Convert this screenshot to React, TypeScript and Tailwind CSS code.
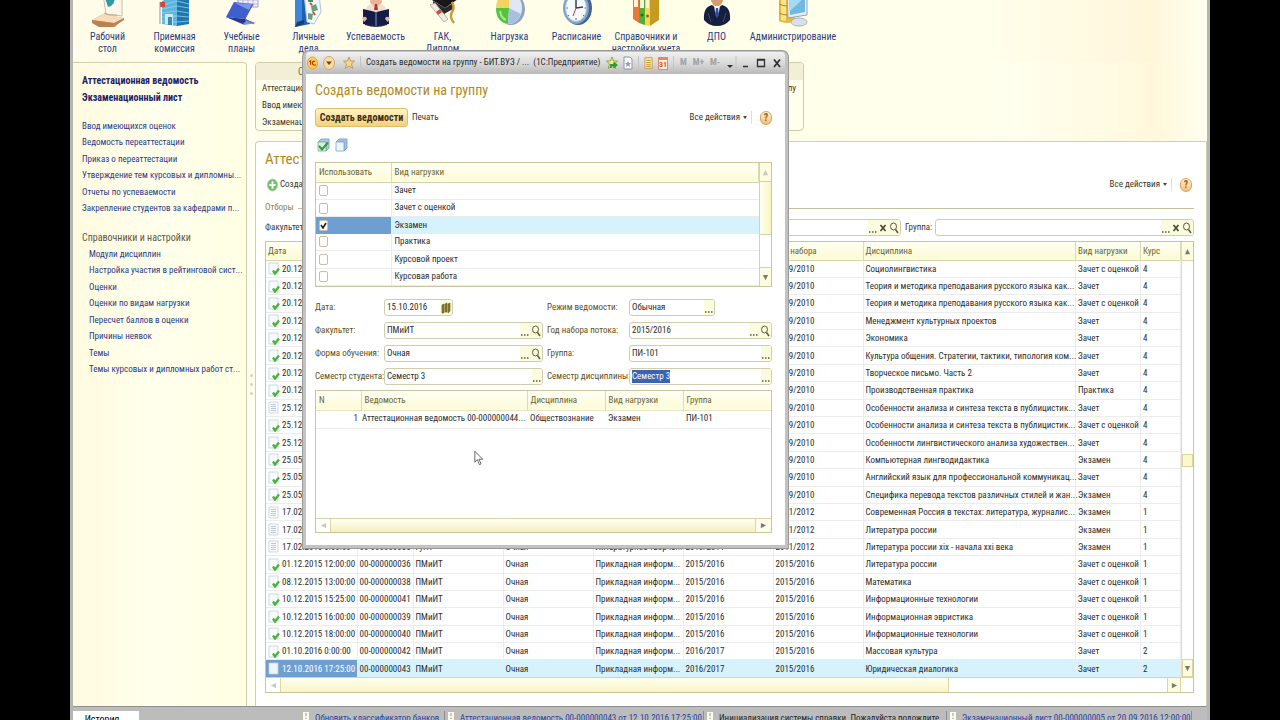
import { useEffect, useRef, type ReactNode } from "react";

const deskIcon = (
  <g>
    <path d="M2 20 13 14l21 4-9 9L8 26z" fill="#d9a878" />
    <path d="M2 20 13 14l21 4-10 5z" fill="#f6dcbc" />
    <path d="M2 20v3l7 4h14l11-7v-2l-10 5z" fill="#b98250" />
    <path d="M13-6h19v22l-16-2z" fill="#fff8ea" stroke="#c9bfa5" />
    <path d="M15-2h9a8 7 0 0 1-6 9z" fill="#2f9aa8" />
    <path d="M14 13q5 3 13 2" fill="none" stroke="#b8a78a" />
  </g>
);
const buildingIcon = (
  <g>
    <path d="M5 1 20-6v32L5 24z" fill="#5fb6dc" />
    <path d="M20-6 32 0v24l-12 2z" fill="#1f78ad" />
    <path d="M5 5l15-4 12 3M5 9l15-3 12 2M5 13l15-2 12 2M5 17l15-1 12 1M5 21l15 1 12-1" stroke="#8fd0ec" strokeWidth=".8" fill="none" />
    <path d="M8 14h8v11l-8-1z" fill="#c9edf8" />
    <path d="M11 17h4v8h-4z" fill="#3d88b1" />
    <path d="M3 2h5v5H3z" fill="#d9432f" />
    <path d="M3 2v22" stroke="#8f9aa0" />
  </g>
);
const plansIcon = (
  <g>
    <path d="M14-5h20v12H14z" fill="#f0f1f8" stroke="#9fa5c0" />
    <path d="M14 0h20M14 4h20M19-5V7M24-5V7M29-5V7" stroke="#a9afc9" strokeWidth=".8" />
    <path d="M2 17 10 2l19 2-8 15z" fill="#3f5fd0" />
    <path d="M11 3l17 1-3 6z" fill="#7e97ea" />
    <path d="M2 17l19 2 11 4-12 2z" fill="#7c8fd6" />
    <path d="M2 17l19 2 1 2-3 3z" fill="#24388f" />
    <path d="M29 4 21 19l9 5" fill="none" stroke="#55639f" />
  </g>
);
const filesIcon = (
  <g>
    <path d="M4-6h15v30L4 27z" fill="#1f5fb8" />
    <path d="M4-6h7v30l-7 3z" fill="#3f86d8" />
    <path d="M6 22l7-2v4l-9 3z" fill="#173f7c" />
    <path d="M13-6h15l2 18-7 12-7-2z" fill="#f4f6fa" stroke="#b6c0d0" />
    <path d="M17-4h5v6h-5z" fill="#4f8a57" />
    <path d="M20 6l5-2 2 6-6 2zM17 13l5 1-1 6-4-1z" fill="#6aa07d" />
    <path d="M19 3l2 2M22 12l2 3" stroke="#bb5342" strokeWidth="2" />
  </g>
);
const readerIcon = (
  <g>
    <path d="M13-6h10l1 8-3 7h-6l-3-7z" fill="#e8b596" />
    <path d="M8 11q0-6 6-7l4 4 4-4q6 1 6 7z" fill="#f2ddd0" />
    <path d="M17 4h2l1 6h-4z" fill="#a33a34" />
    <path d="M7 21h22v4q-11 4-22 0z" fill="#2b3148" />
    <path d="M5 9l13 3 13-3v15l-13 2-13-2z" fill="#141d48" />
    <path d="M18 12v14" stroke="#8f97ba" />
    <path d="M4 18q4-3 5 1l-3 3zM32 18q-4-3-5 1l3 3z" fill="#e8b596" />
  </g>
);
const diplomaIcon = (
  <g>
    <path d="M2-3 18-9 33-1 20 8z" fill="#171717" />
    <path d="M8 1l12 7 8-5v6l-9 5-11-6z" fill="#2c2a29" />
    <path d="M5 5l14 17 4-3L10 3z" fill="#f2ede1" stroke="#a89f8f" strokeWidth=".8" />
    <path d="M11 12l4-3 2 3-4 3z" fill="#c95140" />
    <path d="M27 2q3 6 0 10-3 5 2 11" stroke="#c59b3e" strokeWidth="2.5" fill="none" />
  </g>
);
const pieIcon = (
  <g>
    <ellipse cx="19" cy="9" rx="14" ry="16" fill="#8fa4bd" />
    <ellipse cx="17" cy="8" rx="13" ry="16" fill="#dfe9f5" />
    <path d="M17 8V-8Q5-7 4 8z" fill="#f3d260" />
    <path d="M17 8H4q0 14 12 16z" fill="#56c23f" />
    <path d="M17 8l-1 16q9 0 13-10z" fill="#a9bfe0" />
    <path d="M8 11q1 7 6 9" stroke="#a7ec8d" strokeWidth="2" fill="none" />
  </g>
);
const clockIcon = (
  <g>
    <ellipse cx="19" cy="8" rx="14" ry="17" fill="#44648f" />
    <ellipse cx="17" cy="8" rx="13" ry="16" fill="#7fa2cd" />
    <ellipse cx="17" cy="8" rx="10.500" ry="13.500" fill="#f7fafd" stroke="#b4c4d8" />
    <path d="M17 8V0M17 8l7-1" stroke="#35425a" strokeWidth="1.500" />
    <path d="M17 8l-3 8" stroke="#c83a30" />
    <path d="M17 18v2M9 8H7.500M27 8h-1.500M10 15l-1 1M24 15l1 1" stroke="#5a6a80" />
  </g>
);
const bindersIcon = (
  <g>
    <path d="M5-6h6v29l-6-4z" fill="#e77938" />
    <path d="M11-6h6v31l-6-2z" fill="#55ab3c" />
    <path d="M17-6h5v32l-5-1z" fill="#f6d850" />
    <path d="M22-6l9-1v27l-9 6z" fill="#c99a22" />
    <path d="M18-1h3v9h-3zM12 0h4v8h-4zM6 0h4v7H6z" fill="#fff4d4" />
    <circle cx="19.500" cy="16" r="1.500" fill="#8b6812" />
    <circle cx="14" cy="15" r="1.500" fill="#1f6c1a" />
  </g>
);
const personIcon = (
  <g>
    <path d="M13-6h10l1 7-3 5h-6l-3-5z" fill="#d79a72" />
    <path d="M5 20q-1-13 8-15l5 4 5-4q9 2 8 15-5 6-13 6T5 20z" fill="#16203e" />
    <path d="M15 5l3 3 3-3-1 7-2 3-2-3z" fill="#f3f4f8" />
    <path d="M17 8h2l1 7-2 3-2-3z" fill="#2c4fa6" />
    <path d="M9 13l3 9M27 13l-3 9" stroke="#3c486f" />
  </g>
);
const adminIcon = (
  <g>
    <path d="M4-6h16v27q-8 4-16 0z" fill="#e5b93c" />
    <path d="M6-6h5v27l-5-1z" fill="#fbe38a" />
    <path d="M4 4q8 4 16 0M4 13q8 4 16 0" stroke="#b28b24" fill="none" />
    <path d="M12-4l20-2v21l-19 3z" fill="#e6eef5" stroke="#8ea4b6" />
    <path d="M14-1l16-2v15l-15 3z" fill="#6fb9e2" />
    <path d="M14-1l16-2-15 14z" fill="#a8daf3" />
    <ellipse cx="24" cy="22" rx="8" ry="4" fill="#d9e1e8" stroke="#aab5be" />
  </g>
);

const sections: { icon: ReactNode; lines: string[]; w: string }[] = [
  { icon: deskIcon, lines: ["Рабочий", "стол"], w: "w-[67px]" },
  { icon: buildingIcon, lines: ["Приемная", "комиссия"], w: "w-[67px]" },
  { icon: plansIcon, lines: ["Учебные", "планы"], w: "w-[67px]" },
  { icon: filesIcon, lines: ["Личные", "дела"], w: "w-[67px]" },
  { icon: readerIcon, lines: ["Успеваемость"], w: "w-[67px]" },
  { icon: diplomaIcon, lines: ["ГАК,", "Диплом"], w: "w-[67px]" },
  { icon: pieIcon, lines: ["Нагрузка"], w: "w-[67px]" },
  { icon: clockIcon, lines: ["Расписание"], w: "w-[67px]" },
  { icon: bindersIcon, lines: ["Справочники и", "настройки учета"], w: "w-[72px]" },
  { icon: personIcon, lines: ["ДПО"], w: "w-[69px]" },
  { icon: adminIcon, lines: ["Администрирование"], w: "w-[84px]" },
];

const commands = [
  "Ввод имеющихся оценок",
  "Ведомость переаттестации",
  "Приказ о переаттестации",
  "Утверждение тем курсовых и дипломны...",
  "Отчеты по успеваемости",
  "Закрепление студентов за кафедрами п...",
];
const references = [
  "Модули дисциплин",
  "Настройка участия в рейтинговой сист...",
  "Оценки",
  "Оценки по видам нагрузки",
  "Пересчет баллов в оценки",
  "Причины неявок",
  "Темы",
  "Темы курсовых и дипломных работ ст...",
];

type Row = { ok: boolean; c: string[] };
const r = (ok: boolean, ...c: string[]): Row => ({ ok, c });
const info = "Прикладная информ...";
const rows: Row[] = [
  r(true, "20.12.2013", "", "", "", "", "", "2009/2010", "Социолингвистика", "Зачет с оценкой", "4"),
  r(true, "20.12.2013", "", "", "", "", "", "2009/2010", "Теория и методика преподавания русского языка как...", "Зачет", "4"),
  r(true, "20.12.2013", "", "", "", "", "", "2009/2010", "Теория и методика преподавания русского языка как...", "Зачет с оценкой", "4"),
  r(true, "20.12.2013", "", "", "", "", "", "2009/2010", "Менеджмент культурных проектов", "Зачет", "4"),
  r(true, "20.12.2013", "", "", "", "", "", "2009/2010", "Экономика", "Зачет", "4"),
  r(true, "20.12.2013", "", "", "", "", "", "2009/2010", "Культура общения. Стратегии, тактики, типология ком...", "Зачет", "4"),
  r(true, "20.12.2013", "", "", "", "", "", "2009/2010", "Творческое письмо. Часть 2", "Зачет", "4"),
  r(true, "20.12.2013", "", "", "", "", "", "2009/2010", "Производственная практика", "Практика", "4"),
  r(false, "25.12.2013", "", "", "", "", "", "2009/2010", "Особенности анализа и синтеза текста в публицистик...", "Зачет", "4"),
  r(true, "25.12.2013", "", "", "", "", "", "2009/2010", "Особенности анализа и синтеза текста в публицистик...", "Зачет с оценкой", "4"),
  r(true, "25.12.2013", "", "", "", "", "", "2009/2010", "Особенности лингвистического анализа художествен...", "Зачет", "4"),
  r(true, "25.05.2014", "", "", "", "", "", "2009/2010", "Компьютерная лингводидактика", "Экзамен", "4"),
  r(true, "25.05.2014", "", "", "", "", "", "2009/2010", "Английский язык для профессиональной коммуникац...", "Зачет", "4"),
  r(true, "25.05.2014", "", "", "", "", "", "2009/2010", "Специфика перевода текстов различных стилей и жан...", "Экзамен", "4"),
  r(false, "17.02.2015", "", "", "", "", "", "2011/2012", "Современная Россия в текстах: литература, журналис...", "Экзамен", "1"),
  r(false, "17.02.2015", "", "", "", "", "", "2011/2012", "Литература россии", "Экзамен", "1"),
  r(false, "17.02.2015 0:00:00", "00-000000035", "ГуПТ", "Очная", "Литературное творче...", "2010/2011", "2011/2012", "Литература россии xix - начала xxi века", "Экзамен", "1"),
  r(true, "01.12.2015 12:00:00", "00-000000036", "ПМиИТ", "Очная", info, "2015/2016", "2015/2016", "Литература россии", "Зачет с оценкой", "1"),
  r(true, "08.12.2015 13:00:00", "00-000000038", "ПМиИТ", "Очная", info, "2015/2016", "2015/2016", "Математика", "Зачет с оценкой", "1"),
  r(true, "10.12.2015 15:25:00", "00-000000041", "ПМиИТ", "Очная", info, "2015/2016", "2015/2016", "Информационные технологии", "Зачет с оценкой", "1"),
  r(true, "10.12.2015 16:00:00", "00-000000039", "ПМиИТ", "Очная", info, "2015/2016", "2015/2016", "Информационная эвристика", "Зачет с оценкой", "1"),
  r(true, "10.12.2015 18:00:00", "00-000000040", "ПМиИТ", "Очная", info, "2015/2016", "2015/2016", "Информационные технологии", "Зачет с оценкой", "1"),
  r(true, "01.10.2016 0:00:00", "00-000000042", "ПМиИТ", "Очная", info, "2016/2017", "2015/2016", "Массовая культура", "Зачет", "2"),
  r(false, "12.10.2016 17:25:00", "00-000000043", "ПМиИТ", "Очная", info, "2016/2017", "2015/2016", "Юридическая диалогика", "Зачет", "2"),
];
const heads = ["Дата", "Номер", "Факультет", "Форма", "Специальность", "Учебный год", "Год набора", "Дисциплина", "Вид нагрузки", "Курс"];

function DocIcon({ ok, selected }: { ok: boolean; selected?: boolean }) {
  return (
    <svg viewBox="0 0 13 13" className="h-[13px] w-[13px] shrink-0" aria-hidden="true">
      <path d="M2 1h9v11H2z" fill={selected ? "#eef5fc" : "#f8fafd"} stroke="#c3cde0" strokeWidth=".8" />
      {!ok && !selected && <path d="M4 3.500h5M4 5.500h5M4 7.500h5M4 9.500h5" stroke="#a9bad6" strokeWidth=".8" />}
      {ok && <path d="M6 8.500 8 11.500 12 6.500" fill="none" stroke="#4cb43c" strokeWidth="2.400" />}
    </svg>
  );
}
function Help() {
  return (
    <button aria-label="Справка" className="flex h-[14px] w-[12px] shrink-0 items-center justify-center rounded-full border border-[#d9a45c] bg-linear-to-b from-[#fff3dc] to-[#f3bd73] text-[10px] font-bold leading-none text-[#a35f14]">
      ?
    </button>
  );
}
function AllActions() {
  return (
    <button className="mr-[8px] flex items-center gap-[3px] border-r border-[#e2e0cc] pr-[4px] text-[9px] text-[#3a3626]">
      Все действия
      <svg viewBox="0 0 4 3" className="h-[3px] w-[4px]" aria-hidden="true"><path d="M0 0h4L2 3z" fill="#4a4630" /></svg>
    </button>
  );
}
function Lens() {
  return (
    <svg viewBox="0 0 10 12" className="h-[12px] w-[10px]" aria-hidden="true">
      <ellipse cx="4.500" cy="4.500" rx="3" ry="3.500" fill="none" stroke="#5d5a32" />
      <path d="M6.500 7.500 9 11" stroke="#5d5a32" strokeWidth="1.500" />
    </svg>
  );
}
function Dots() {
  return (
    <svg viewBox="0 0 8 12" className="h-[12px] w-[8px]" aria-hidden="true">
      <path d="M0 10h1.500M3 10h1.500M6 10h1.500" stroke="#5d5a32" strokeWidth="1.500" />
    </svg>
  );
}
function Cross() {
  return (
    <svg viewBox="0 0 8 10" className="h-[10px] w-[8px]" aria-hidden="true">
      <path d="M1.500 2l5 6M6.500 2l-5 6" stroke="#45442a" strokeWidth="1.600" />
    </svg>
  );
}
function Arrow({ dir, dim }: { dir: "up" | "down" | "left" | "right"; dim?: boolean }) {
  const d = { up: "M4 1 7 7H1z", down: "M4 7 7 1H1z", left: "M1 4 7 1v6z", right: "M7 4 1 1v6z" }[dir];
  return (
    <svg viewBox="0 0 8 8" className="h-[7px] w-[7px]" aria-hidden="true">
      <path d={d} fill={dim ? "#c9c9bd" : "#7b7b70"} />
    </svg>
  );
}

function Field({ id, value, tools = "", selected = false, className = "" }: { id: string; value: string; tools?: string; selected?: boolean; className?: string }) {
  const ref = useRef<HTMLInputElement>(null);
  useEffect(() => {
    if (selected) {
      ref.current?.focus();
      ref.current?.select();
    }
  }, [selected]);
  return (
    <div className={"flex h-[17px] min-w-0 items-stretch rounded-[3px] border border-[#cfcdae] bg-white " + className}>
      <input id={id} ref={ref} defaultValue={value} className="w-0 min-w-0 flex-1 bg-transparent pl-[2px] text-[9px] text-[#2c2c2c] outline-none selection:bg-[#3a62b5] selection:text-white" />
      <div className="flex items-center gap-[2px] rounded-r-[2px] bg-[#fbfbe0] px-px">
        {tools.includes("d") && <button type="button" aria-label="Выбрать"><Dots /></button>}
        {tools.includes("x") && <button type="button" aria-label="Очистить"><Cross /></button>}
        {tools.includes("q") && <button type="button" aria-label="Открыть"><Lens /></button>}
        {tools.includes("c") && (
          <button type="button" aria-label="Календарь">
            <svg viewBox="0 0 10 12" className="h-[12px] w-[10px]" aria-hidden="true">
              <path d="M1 3l2-1v9H1zM4 2l2-1v9H4zM7 2l2-1v8L7 11z" fill="#8b7c2c" stroke="#6d6120" strokeWidth=".7" />
            </svg>
          </button>
        )}
      </div>
    </div>
  );
}

function SidePanel() {
  const link = "flex items-center whitespace-nowrap text-[#2b3a86]";
  return (
    <nav className="flex w-[174px] shrink-0 flex-col overflow-hidden rounded-tr-[4px] border-r border-t border-[#d3cfae] bg-linear-to-r from-[#fffbe0] via-[#ffffec] to-[#ffffe4] pl-[9px] pt-[9px] text-[9px]">
      <a href="#attest" className="h-[17px] whitespace-nowrap text-[10px] font-bold leading-[17px] text-[#1d2466]">Аттестационная ведомость</a>
      <a href="#exam" className="h-[17px] whitespace-nowrap text-[10px] font-bold leading-[17px] text-[#1d2466]">Экзаменационный лист</a>
      <div className="mt-[12px] grid h-[99px] auto-rows-fr">
        {commands.map((t) => <a key={t} href="#cmd" className={link}>{t}</a>)}
      </div>
      <h2 className="mt-[12px] h-[17px] text-[10px] leading-[17px] text-[#5d5745]">Справочники и настройки</h2>
      <div className="grid h-[132px] auto-rows-fr pl-[7px]">
        {references.map((t) => <a key={t} href="#ref" className={link}>{t}</a>)}
      </div>
    </nav>
  );
}

function JournalTable() {
  const widths = ["w-[91px]", "w-[56px]", "w-[90px]", "w-[90px]", "w-[90px]", "w-[90px]", "w-[90px]", "w-auto", "w-[65px]", "w-[40px]"];
  return (
    <div className="mr-[12px] flex h-[452px] flex-col border border-[#c9c69c]">
      <div className="flex min-h-0 flex-1">
        <table className="h-full w-full table-fixed border-collapse text-[9px] leading-[12px] text-[#2c2c2c]">
          <thead>
            <tr className="h-[18px] border-b border-[#d6d3a8] bg-linear-to-b from-[#fffff4] to-[#fcfbd4] text-left text-[#6a6330]">
              {heads.map((h, i) => (
                <th key={h} className={widths[i] + " whitespace-nowrap border-r border-[#dedbb4] py-0 pl-[2px] font-normal"}>{h}</th>
              ))}
            </tr>
          </thead>
          <tbody>
            {rows.map((row, n) => {
              const sel = n === rows.length - 1;
              return (
                <tr key={n} className={sel ? "bg-[#d6f3fd]" : "border-b border-[#ececec]"}>
                  {row.c.map((c, i) => (
                    <td key={i} className={"whitespace-nowrap border-r border-[#ececec] py-0 " + (i === 0 ? (sel ? "bg-[#6f9fd0] pl-px text-white" : "pl-px") : "pl-[2px]")}>
                      {i === 0 ? <div className="flex items-center gap-[2px]"><DocIcon ok={row.ok} selected={sel} />{c}</div> : c}
                    </td>
                  ))}
                </tr>
              );
            })}
          </tbody>
        </table>
        <div className="flex w-[12px] shrink-0 flex-col items-center border-l border-[#e0ddb8]">
          <div className="flex h-[19px] w-full items-center justify-center border-b border-[#d6d3a8] bg-[#fdfce0]"><Arrow dir="up" /></div>
          <div className="flex flex-1 flex-col justify-center">
            <div className="h-[13px] w-[11px] border border-[#dcd79c] bg-[#fbf8cf]" />
          </div>
          <div className="flex h-[18px] w-full items-center justify-center border border-[#dcd79c] bg-[#fdfce0]"><Arrow dir="down" /></div>
        </div>
      </div>
      <div className="flex h-[15px] border-t border-[#d6d3a8]">
        <div className="flex w-[15px] items-center justify-center border-r border-[#dcd79c]"><Arrow dir="left" dim /></div>
        <div className="w-[668px] border-r border-[#dcd79c] bg-linear-to-b from-[#fffff0] to-[#f8f4c4]" />
        <div className="flex-1" />
        <div className="flex w-[14px] items-center justify-center border-x border-[#dcd79c] bg-[#fdfce0]"><Arrow dir="right" /></div>
        <div className="w-[12px]" />
      </div>
    </div>
  );
}

function Journal() {
  return (
    <section className="mt-[10px] flex min-h-0 flex-1 flex-col rounded-tl-[4px] border border-b-0 border-[#d3cfae] bg-white pl-[9px] text-[9px] text-[#3a3626]">
      <h1 className="mt-[7px] text-[15px] leading-[20px] text-[#b08a1c]">Аттестационные ведомости</h1>
      <div className="mr-[14px] mt-[7px] flex h-[17px] items-center">
        <button className="flex items-center gap-[2px] pl-[2px]">
          <svg viewBox="0 0 12 14" className="h-[14px] w-[11px]" aria-hidden="true">
            <ellipse cx="6" cy="7" rx="5.500" ry="6.500" fill="#6fbf6b" stroke="#a7cfa2" />
            <path d="M6 3v8M2.500 7h7" stroke="#fff" strokeWidth="2" />
          </svg>
          Создать
        </button>
        <div className="flex-1" />
        <AllActions />
        <Help />
      </div>
      <div className="mr-[12px] mt-[7px] flex h-[16px] items-center gap-1 text-[#8a7f52]">
        Отборы <span className="h-px flex-1 bg-[#c4bf9f]" />
      </div>
      <div className="mb-[5px] mr-[12px] mt-[3px] flex h-[17px] items-center">
        <label htmlFor="f-fac" className="w-[60px]">Факультет:</label>
        <Field id="f-fac" value="" tools="dxq" className="w-[576px]" />
        <label htmlFor="f-group" className="ml-[4px] w-[30px]">Группа:</label>
        <Field id="f-group" value="" tools="dxq" className="flex-1" />
      </div>
      <JournalTable />
    </section>
  );
}

const kinds = ["Зачет", "Зачет с оценкой", "Экзамен", "Практика", "Курсовой проект", "Курсовая работа"];

function Star({ plus }: { plus?: boolean }) {
  return (
    <svg viewBox="0 0 12 14" className="h-[14px] w-[12px]" aria-hidden="true">
      <path d="M6 1l1.600 4H11.500L8.500 8l1.200 4.500L6 10l-3.700 2.500L3.500 8l-3-3h3.900z" fill={plus ? "#e9ee90" : "#f6d68c"} stroke={plus ? "#8c9c2a" : "#c2924a"} strokeWidth=".9" />
      {plus && <path d="M5 12V9h4M7.500 6.500 10.500 9l-3 2.500" fill="none" stroke="#2e9c33" strokeWidth="1.800" />}
    </svg>
  );
}
const sep = <span className="h-[14px] w-px shrink-0 bg-[#c4c4c4]" />;

function TitleBar() {
  return (
    <header className="flex h-[22px] shrink-0 items-center rounded-t-[4px] bg-linear-to-b from-[#f0f0f0] via-[#dadada] to-[#b9b9b9] text-[9px] text-[#2a2a2a]">
      <svg viewBox="0 0 12 14" className="ml-px h-[14px] w-[11px]" aria-hidden="true">
        <ellipse cx="6" cy="7" rx="5.500" ry="6.500" fill="#ffd34a" stroke="#e39a35" />
        <path d="M2.500 5.500 4 4.500V9M9 5.500Q6 4 6 7t4 2" fill="none" stroke="#c32517" strokeWidth="1.200" />
      </svg>
      <button aria-label="Меню" className="ml-[5px]">
        <svg viewBox="0 0 12 14" className="h-[14px] w-[12px]" aria-hidden="true">
          <ellipse cx="6" cy="7" rx="5.500" ry="6.500" fill="#f8dca8" stroke="#d6a566" />
          <path d="M3 5.500h6L6 9z" fill="#6a4620" />
        </svg>
      </button>
      <button aria-label="Избранное" className="ml-[8px] mr-[5px]"><Star /></button>
      {sep}
      <span className="ml-[5px] flex-1 whitespace-nowrap">Создать ведомости на группу - БИТ.ВУЗ / ... &nbsp;(1С:Предприятие)</span>
      <div className="flex items-center gap-[5px]">
        <button aria-label="Добавить в избранное"><Star plus /></button>
        <button aria-label="Ссылка">
          <svg viewBox="0 0 10 14" className="h-[14px] w-[10px]" aria-hidden="true">
            <path d="M1 1h6l2 2v10H1z" fill="#fafafa" stroke="#8b96a8" />
            <path d="M5 5l1 2h2L6.500 8.500 7 11 5 9.500 3 11l.5-2.500L2 7h2z" fill="#8f9bb3" />
          </svg>
        </button>
        {sep}
        <button aria-label="Калькулятор">
          <svg viewBox="0 0 10 14" className="h-[14px] w-[9px]" aria-hidden="true">
            <path d="M1 1h8v12H1z" fill="#fbe9a8" stroke="#cf9a3a" />
            <path d="M2.500 4h5M2.500 6.500h5M2.500 9h5M2.500 11h5" stroke="#b98a2e" />
          </svg>
        </button>
        <button aria-label="Календарь" className="flex h-[13px] w-[10px] items-end justify-center border border-t-[3px] border-[#df8a68] bg-[#fff0df] text-[8px] font-bold leading-[9px] text-[#d8532d]">31</button>
        {sep}
      </div>
      <div className="ml-[6px] flex items-center gap-[6px] text-[9px] font-bold text-[#a2a2a2]">
        <button>M</button>
        <button>M+</button>
        <button>M-</button>
      </div>
      <svg viewBox="0 0 60 14" className="ml-[5px] h-[14px] w-[60px] shrink-0" aria-hidden="true">
        <path d="M2 9h6L5 12z" fill="#303030" />
        <path d="M11 0v14" stroke="#c4c4c4" />
        <path d="M18 10.500h5M32.500 3.500h7v7h-7zM32 4h8" fill="none" stroke="#303030" strokeWidth="1.300" />
        <path d="M49 3.500l6 7.500M55 3.500l-6 7.500" stroke="#303030" strokeWidth="1.800" />
      </svg>
    </header>
  );
}

function Dialog() {
  const head = "border-r border-[#dedbb4] px-[3px] py-0 text-left font-normal";
  return (
    <div role="dialog" aria-label="Создать ведомости на группу" className="absolute left-[230px] top-[51px] flex h-[497px] w-[485px] flex-col rounded-t-[6px] border-[3px] border-t border-[#c2c2c2] bg-white shadow-[0_0_0_1px_#9a9a9a]">
      <TitleBar />
      <div className="flex flex-col pl-[9px] pr-[13px] pt-[6px] text-[9px] text-[#5a4f22]">
        <h1 className="text-[14px] leading-[20px] text-[#b08a1c]">Создать ведомости на группу</h1>
        <div className="mt-[8px] flex h-[19px] items-center">
          <button className="h-[19px] w-[93px] whitespace-nowrap rounded-[3px] border border-[#e0bf6a] bg-linear-to-b from-[#fff3c6] to-[#f6d079] text-[10px] font-bold text-[#3b2f12]">Создать ведомости</button>
          <button className="ml-[4px] text-[#3a3626]">Печать</button>
          <div className="flex-1" />
          <AllActions />
          <Help />
        </div>
        <div className="mb-[9px] mt-[10px] flex h-[16px] items-center gap-[5px] pl-[2px]">
          <button aria-label="Установить флажки">
            <svg viewBox="0 0 13 14" className="h-[14px] w-[13px]" aria-hidden="true">
              <path d="M4 1h8v9l-3 3V4H1z" fill="#a9cbe4" stroke="#6f9cc4" strokeWidth=".8" />
              <path d="M1 4h8v9H1z" fill="#d9eedd" stroke="#7cad8c" strokeWidth=".8" />
              <path d="M2 8l3 3.500L11 4.500" fill="none" stroke="#2f9c3a" strokeWidth="2" />
            </svg>
          </button>
          <button aria-label="Снять флажки">
            <svg viewBox="0 0 13 14" className="h-[14px] w-[13px]" aria-hidden="true">
              <path d="M4 1h8v9l-3 3V4H1z" fill="#9fc2e6" stroke="#6f9cc4" strokeWidth=".8" />
              <path d="M1 4h8v9H1z" fill="#edf5fc" stroke="#7fa6cf" strokeWidth=".8" />
            </svg>
          </button>
        </div>
        <div className="flex h-[125px] border border-[#c9c69c]">
          <table className="h-full flex-1 table-fixed border-collapse text-[#2c2c2c]">
            <thead>
              <tr className="h-[19px] border-b border-[#d6d3a8] bg-linear-to-b from-[#fffff4] to-[#fcfbd8] text-[#6a6330]">
                <th className={head + " w-[75px]"}>Использовать</th>
                <th className={head}>Вид нагрузки</th>
              </tr>
            </thead>
            <tbody>
              {kinds.map((k, i) => (
                <tr key={k} className={i === 2 ? "bg-[#d6f3fd]" : "border-b border-[#ececec]"}>
                  <td className={"border-r border-[#ececec] py-0 pl-[3px] " + (i === 2 ? "bg-[#6f9fd0]" : "")}>
                    <span className="relative block h-[11px] w-[9px]">
                      <input id={"k" + i} type="checkbox" defaultChecked={i === 2} className="peer block h-[11px] w-[9px] appearance-none rounded-[2px] border border-[#c4c0a0] bg-white" />
                      <svg viewBox="0 0 9 11" className="pointer-events-none absolute inset-0 hidden h-[11px] w-[9px] peer-checked:block" aria-hidden="true">
                        <path d="M2 5l2 3 3-5" fill="none" stroke="#1d1d1d" strokeWidth="1.600" />
                      </svg>
                    </span>
                  </td>
                  <td className="py-0 pl-[3px]"><label htmlFor={"k" + i}>{k}</label></td>
                </tr>
              ))}
            </tbody>
          </table>
          <div className="flex w-[12px] flex-col border-l border-[#d6d3a8]">
            <div className="flex h-[19px] items-center justify-center border-b border-[#d6d3a8] bg-[#fdfce0]"><Arrow dir="up" dim /></div>
            <div className="flex h-[53px] items-center justify-center border-b border-[#d6d3a8] bg-linear-to-r from-[#fffff0] to-[#f8f4c4]" />
            <div className="flex-1" />
            <div className="flex h-[19px] items-center justify-center border-t border-[#d6d3a8] bg-[#fdfce0]"><Arrow dir="down" /></div>
          </div>
        </div>
        <form className="mb-[5px] mt-[12px] grid grid-cols-[69px_159px_4px_82px_1fr] items-center gap-y-[6px] whitespace-nowrap">
          <label htmlFor="d-date">Дата:</label>
          <Field id="d-date" value="15.10.2016" tools="c" className="w-[69px]" />
          <span />
          <label htmlFor="d-mode">Режим ведомости:</label>
          <Field id="d-mode" value="Обычная" tools="d" className="w-[86px]" />
          <label htmlFor="d-fac">Факультет:</label>
          <Field id="d-fac" value="ПМиИТ" tools="dq" />
          <span />
          <label htmlFor="d-year">Год набора потока:</label>
          <Field id="d-year" value="2015/2016" tools="dq" />
          <label htmlFor="d-form">Форма обучения:</label>
          <Field id="d-form" value="Очная" tools="dq" />
          <span />
          <label htmlFor="d-group">Группа:</label>
          <Field id="d-group" value="ПИ-101" tools="d" />
          <label htmlFor="d-sem">Семестр студента:</label>
          <Field id="d-sem" value="Семестр 3" tools="d" />
          <span />
          <label htmlFor="d-dsem">Семестр дисциплины:</label>
          <Field id="d-dsem" value="Семестр 3" tools="d" selected />
        </form>
        <div className="flex h-[143px] flex-col border border-[#c9c69c]">
          <table className="w-full table-fixed border-collapse whitespace-nowrap text-[#2c2c2c]">
            <thead>
              <tr className="h-[19px] border-b border-[#e6e3c4] bg-linear-to-b from-[#fffff4] to-[#fcfbd8] text-[#6a6330]">
                <th className={head + " w-[45px]"}>N</th>
                <th className={head + " w-[166px]"}>Ведомость</th>
                <th className={head + " w-[78px]"}>Дисциплина</th>
                <th className={head + " w-[78px]"}>Вид нагрузки</th>
                <th className="px-[3px] py-0 text-left font-normal">Группа</th>
              </tr>
            </thead>
            <tbody>
              <tr className="h-[18px] border-b border-[#ececec]">
                <td className="py-0 pr-[3px] text-right">1</td>
                <td className="py-0 pl-px">Аттестационная ведомость 00-000000044...</td>
                <td className="px-[3px] py-0">Обществознание</td>
                <td className="px-[3px] py-0">Экзамен</td>
                <td className="px-[3px] py-0">ПИ-101</td>
              </tr>
            </tbody>
          </table>
          <div className="flex-1" />
          <div className="flex h-[14px] border-t border-[#d6d3a8]">
            <div className="flex w-[15px] items-center justify-center border-r border-[#dcd79c]"><Arrow dir="left" dim /></div>
            <div className="flex-1 bg-linear-to-b from-[#fffff0] to-[#f7edc0]" />
            <div className="flex w-[16px] items-center justify-center border-l border-[#dcd79c] bg-[#fdfce8]"><Arrow dir="right" /></div>
          </div>
        </div>
      </div>
      <svg viewBox="0 0 12 18" className="absolute left-[168px] top-[397px] h-[18px] w-[10px]" aria-hidden="true">
        <path d="M1 1v13l3-3 2.500 6 2-1L6 10.500h4.500z" fill="#fff" stroke="#4a4a4a" />
      </svg>
    </div>
  );
}

const history = [
  { t: "Обновить классификатор банков", w: "w-[143px]", link: true },
  { t: "Аттестационная ведомость 00-000000043 от 12.10.2016 17:25:00", w: "w-[257px]", link: true },
  { t: "Инициализация системы справки. Пожалуйста подождите", w: "w-[241px]", link: false },
  { t: "Экзаменационный лист 00-000000005 от 20.09.2016 12:00:00", w: "w-auto", link: true },
];

export default function App() {
  return (
    <div className="h-screen overflow-hidden bg-black px-[70px] font-['Roboto_Condensed','Liberation_Sans',sans-serif]">
      <div className="relative flex h-full flex-col overflow-hidden border-x-[3px] border-[#b5b5b5] bg-linear-to-r from-[#fffdea] via-[#ffffe8] to-[#fffff0]">
        <nav className="flex h-[62px] shrink-0 items-start bg-linear-to-r from-transparent from-80% via-[#fff6da] via-95% to-transparent pl-px">
          {sections.map((s) => (
            <a key={s.lines[0]} href="#section" className={s.w + " flex shrink-0 flex-col items-center whitespace-nowrap text-center text-[10px] leading-[12px] text-[#2b3a86]"}>
              <svg viewBox="0 0 36 27" className="mb-[4px] h-[27px] w-[36px]" aria-hidden="true">{s.icon}</svg>
              {s.lines.map((l) => <span key={l}>{l}</span>)}
            </a>
          ))}
        </nav>
        <div className="flex min-h-0 flex-1">
          <SidePanel />
          <div className="flex w-[8px] shrink-0 flex-col items-center justify-center gap-[6px] bg-[#fffff0]">
            <span className="h-[3px] w-[3px] rounded-full bg-[#d8d4b4]" />
            <span className="h-[3px] w-[3px] rounded-full bg-[#d8d4b4]" />
            <span className="h-[3px] w-[3px] rounded-full bg-[#d8d4b4]" />
          </div>
          <main className="flex min-w-0 flex-1 flex-col bg-linear-to-r from-transparent from-80% via-[#fff8dc] via-95% to-transparent">
            <section className="h-[69px] w-[549px] shrink-0 overflow-hidden rounded-[4px] border border-[#cfcba8] bg-[#ffffec] text-[9px] text-[#3a3626]">
              <h2 className="h-[17px] bg-[#f3efd6] pl-[42px] text-[10px] leading-[17px] text-[#7a7048]">См. также</h2>
              <div className="flex justify-between pl-[6px] pr-[7px] leading-[17px]">
                <div>
                  <a href="#a" className="block">Аттестационная ведомость</a>
                  <a href="#b" className="block">Ввод имеющихся оценок</a>
                  <a href="#c" className="block">Экзаменационный лист</a>
                </div>
                <a href="#d">Создать ведомости на группу</a>
              </div>
            </section>
            <Journal />
          </main>
        </div>
        <footer className="-mx-[3px] flex h-[14px] shrink-0 overflow-hidden border-t border-[#8f8f8f] bg-[#bcbcbc] pt-[4px] text-[9px] leading-[14px]">
          <button className="ml-[3px] h-[14px] w-[66px] bg-white text-center text-[10px] leading-[18px] text-black">История...</button>
          <div className="flex gap-[2px] pl-[163px]">
            {history.map((h) => (
              <a key={h.t} href="#history" className={h.w + " flex shrink-0 gap-[5px] whitespace-nowrap border-r border-[#8d8d8d] " + (h.link ? "text-[#2a3f9a]" : "text-[#222222]")}>
                <svg viewBox="0 0 8 10" className="h-[10px] w-[8px] shrink-0" aria-hidden="true">
                  <path d="M.5.500h7v9h-7z" fill="#fbfbf4" stroke="#bdbda4" />
                  <path d="M4 2v3M4 6.500v1.500" stroke="#89a06a" />
                </svg>
                {h.t}
              </a>
            ))}
          </div>
        </footer>
        <Dialog />
      </div>
    </div>
  );
}
